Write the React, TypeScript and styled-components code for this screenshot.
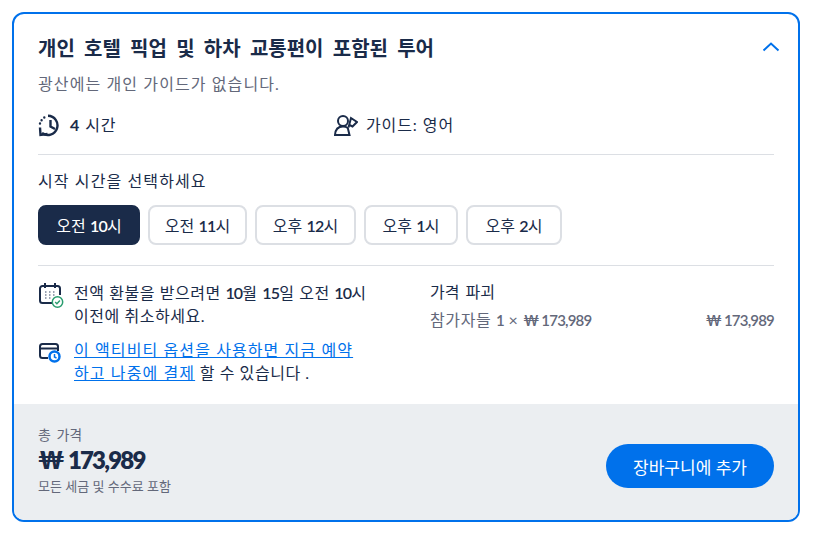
import React from "react";
import styled, { createGlobalStyle } from "styled-components";

const GlobalStyle = createGlobalStyle`
  * { box-sizing: border-box; }
  body {
    margin: 0;
    background: #fff;
    font-family: Lato, "Noto Sans CJK KR", sans-serif;
    color: #1a2b49;
  }
`;

const Page = styled.div`
  width: 814px;
  height: 536px;
  padding: 12px 14px 14px 12px;
`;

const Card = styled.section`
  width: 788px;
  height: 510px;
  border: 2px solid #0071eb;
  border-radius: 12px;
  overflow: hidden;
  display: flex;
  flex-direction: column;
  background: #fff;
`;

const Body = styled.div`
  flex: 1;
  padding: 20px 24px 0;
`;

const TitleRow = styled.div`
  display: flex;
  align-items: center;
  justify-content: space-between;
  height: 28px;
  > svg {
    margin-right: -7px;
    margin-top: -2px;
  }
`;

const Title = styled.h2`
  margin: 0;
  font-size: 20px;
  line-height: 28px;
  font-weight: 700;
  word-spacing: 4.4px;
  color: #1a2b49;
`;

const Notice = styled.p`
  margin: 11px 0 0;
  font-size: 16px;
  line-height: 22px;
  letter-spacing: 1.1px;
  color: #63687a;
`;

const Facts = styled.div`
  display: grid;
  grid-template-columns: 296px 1fr;
  margin-top: 17px;
  height: 26px;
  align-items: center;
`;

const Fact = styled.div`
  display: flex;
  align-items: center;
  gap: 8px;
  font-size: 16px;
  line-height: 22px;
  letter-spacing: 0.9px;
  > span > b {
    font-weight: 700;
  }
`;

const Divider = styled.hr`
  border: 0;
  height: 1px;
  background: #dcdfe4;
  margin: 16px 0 0;
`;

const SlotLabel = styled.div`
  margin-top: 15px;
  font-size: 16px;
  line-height: 22px;
  letter-spacing: 1.1px;
`;

const Slots = styled.div`
  display: flex;
  gap: 8px;
  margin: 13px 0 4px;
`;

const Slot = styled.button<{ $active?: boolean; $width: number }>`
  width: ${(p) => p.$width}px;
  height: 40px;
  padding: 0;
  border-radius: 8px;
  border: 2px solid ${(p) => (p.$active ? "#1a2b49" : "#dcdfe4")};
  background: ${(p) => (p.$active ? "#1a2b49" : "#fff")};
  color: ${(p) => (p.$active ? "#fff" : "#1a2b49")};
  font-family: inherit;
  font-size: 16px;
  font-weight: 400;
`;

const Num = styled.span`
  font-weight: 600;
  letter-spacing: -0.8px;
`;

const Price = styled(Num)`
  font-size: 15px;
`;

const SecondDivider = styled(Divider)`
  margin-top: 20px;
`;

const Details = styled.div`
  display: grid;
  grid-template-columns: 392px 344px;
  margin-top: 15px;
`;

const Terms = styled.div`
  display: flex;
  flex-direction: column;
  gap: 11px;
`;

const Term = styled.div`
  display: flex;
  gap: 10px;
  font-size: 16px;
  line-height: 23px;
  letter-spacing: 0.55px;
  word-break: keep-all;
  > svg {
    flex: none;
    margin-top: 2px;
  }
  > p {
    margin: 0;
    width: 304px;
  }
  a {
    color: #0071eb;
    text-decoration: underline;
    letter-spacing: 1.1px;
  }
`;

const Breakdown = styled.div`
  font-size: 16px;
  line-height: 22px;
  word-spacing: 2px;
`;

const BreakdownRow = styled.div`
  display: flex;
  justify-content: space-between;
  margin-top: 6px;
  color: #63687a;
  font-size: 16px;
  line-height: 22px;
  letter-spacing: 0.6px;
  word-spacing: 0;
`;

const Footer = styled.footer`
  height: 116px;
  background: #ebeef1;
  padding: 22px 24px 0;
  display: flex;
  justify-content: space-between;
  align-items: flex-start;
`;

const TotalLabel = styled.div`
  font-size: 14px;
  line-height: 18px;
  word-spacing: 2px;
  color: #63687a;
`;

const Total = styled.div`
  font-size: 24px;
  line-height: 30px;
  font-weight: 800;
  letter-spacing: -1.8px;
  word-spacing: 1.5px;
  color: #1a2b49;
  margin: 1px 0 2px;
`;

const TaxNote = styled.div`
  font-size: 13px;
  line-height: 18px;
  color: #63687a;
`;

const CartButton = styled.button`
  width: 168px;
  height: 44px;
  margin-top: 18px;
  border: 0;
  border-radius: 22px;
  background: #0071eb;
  color: #fff;
  font-family: inherit;
  font-size: 17px;
  font-weight: 400;
`;

const ChevronUp = () => (
  <svg width="20" height="20" viewBox="0 0 20 20" fill="none" stroke="#0071eb" strokeWidth="2">
    <path d="M2.5 13.5 10 6.5l7.500 7" />
  </svg>
);

const HistoryIcon = () => (
  <svg width="24" height="24" viewBox="0 0 24 24" fill="none" stroke="#1a2b49" strokeWidth="2.400">
    <path d="M10 2.800A9.600 9.600 0 1 1 4 20" />
    <path d="M12.500 7v6.500l4.500 2.500" />
    <path d="M2 14.500l.5 7.500 7-1" />
    <path d="M6.300 4.500v.01M3.600 7.300v.01M2 10.500v.01" strokeLinecap="round" />
  </svg>
);

const GuideIcon = () => (
  <svg width="24" height="24" viewBox="0 0 24 24" fill="none" stroke="#1a2b49" strokeWidth="2">
    <circle cx="9" cy="8" r="5" />
    <path d="M1 22c.3-5.500 3.200-8.500 8-8.500 2 0 3.600.5 4.800 1.500l1.700 7z" />
    <path d="M14.500 14.500 17 5l6 4-4.500 4.500-3-1.500" />
  </svg>
);

const CalendarIcon = () => (
  <svg width="26" height="26" viewBox="0 0 26 26" fill="none">
    <path d="M14 20H4.500A2.500 2.500 0 0 1 2 17.500V5.500A2.500 2.500 0 0 1 4.500 3h15A2.500 2.500 0 0 1 22 5.500V12" stroke="#1a2b49" strokeWidth="2" />
    <path d="M7 0v5M17 0v5" stroke="#1a2b49" strokeWidth="2" />
    <path d="M7 9h1.500M11 9h1.500M15 9h1.500M7 12h1.500M11 12h1.500M15 12h1.500M7 15h1.500M11 15h1.500" stroke="#7a8499" strokeWidth="1.500" />
    <circle cx="19.500" cy="19" r="5.200" fill="#fff" stroke="#2a9d6f" strokeWidth="1.500" />
    <path d="m17.200 19 1.700 1.700 3-3.200" stroke="#2a9d6f" strokeWidth="1.500" />
  </svg>
);

const PayLaterIcon = () => (
  <svg width="26" height="26" viewBox="0 0 26 26" fill="none">
    <path d="M10 18H4.500A2.500 2.500 0 0 1 2 15.500v-9A2.500 2.500 0 0 1 4.500 4h13A2.500 2.500 0 0 1 20 6.500V11" stroke="#1a2b49" strokeWidth="2" />
    <path d="M2 8.500h18" stroke="#1a2b49" strokeWidth="2" />
    <circle cx="16.500" cy="16.500" r="5" fill="#fff" stroke="#0071eb" strokeWidth="2.500" />
    <path d="M16.500 14v3l2 1" stroke="#0071eb" strokeWidth="1.500" />
  </svg>
);

const slots = [
  { period: "오전", hour: "10", width: 102, active: true },
  { period: "오전", hour: "11", width: 99 },
  { period: "오후", hour: "12", width: 101 },
  { period: "오후", hour: "1", width: 94 },
  { period: "오후", hour: "2", width: 96 },
];

export default function App() {
  return (
    <Page>
      <GlobalStyle />
      <Card>
        <Body>
          <TitleRow>
            <Title>개인 호텔 픽업 및 하차 교통편이 포함된 투어</Title>
            <ChevronUp />
          </TitleRow>
          <Notice>광산에는 개인 가이드가 없습니다.</Notice>
          <Facts>
            <Fact>
              <HistoryIcon />
              <span><b>4</b> 시간</span>
            </Fact>
            <Fact>
              <GuideIcon />
              <span>가이드: 영어</span>
            </Fact>
          </Facts>
          <Divider />
          <SlotLabel>시작 시간을 선택하세요</SlotLabel>
          <Slots>
            {slots.map((s) => (
              <Slot key={s.period + s.hour} $active={s.active} $width={s.width}>
                {s.period} <Num>{s.hour}</Num>시
              </Slot>
            ))}
          </Slots>
          <SecondDivider />
          <Details>
            <Terms>
              <Term>
                <CalendarIcon />
                <p>전액 환불을 받으려면 <Num>10</Num>월 <Num>15</Num>일 오전 <Num>10</Num>시 이전에 취소하세요.</p>
              </Term>
              <Term>
                <PayLaterIcon />
                <p><a href="#">이 액티비티 옵션을 사용하면 지금 예약 하고 나중에 결제</a> 할 수 있습니다 .</p>
              </Term>
            </Terms>
            <Breakdown>
              가격 파괴
              <BreakdownRow>
                <span>참가자들 <Price>1</Price> × <Price>₩ 173,989</Price></span>
                <Price>₩ 173,989</Price>
              </BreakdownRow>
            </Breakdown>
          </Details>
        </Body>
        <Footer>
          <div>
            <TotalLabel>총 가격</TotalLabel>
            <Total>₩ 173,989</Total>
            <TaxNote>모든 세금 및 수수료 포함</TaxNote>
          </div>
          <CartButton>장바구니에 추가</CartButton>
        </Footer>
      </Card>
    </Page>
  );
}
